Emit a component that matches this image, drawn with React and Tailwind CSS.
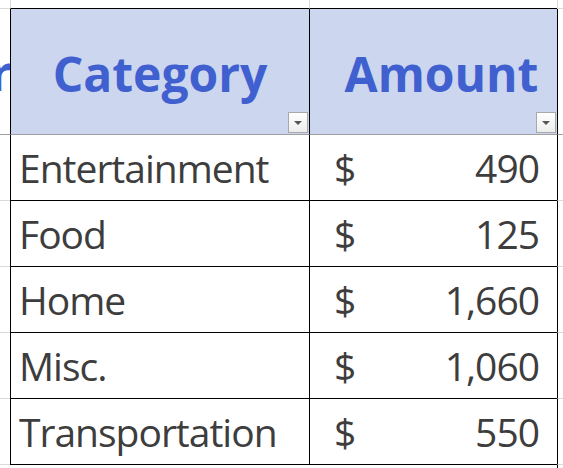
const rows = [
  ['Entertainment', '490'],
  ['Food', '125'],
  ['Home', '1,660'],
  ['Misc.', '1,060'],
  ['Transportation', '550'],
]

function FilterButton() {
  return (
    <div className="absolute right-px bottom-px w-[20px] h-[21px] border border-[#a9a9a9] bg-gradient-to-b from-white to-[#ededed] flex items-center justify-center">
      <div className="w-0 h-0 border-l-[4px] border-r-[4px] border-t-[4px] border-l-transparent border-r-transparent border-t-[#555]" />
    </div>
  )
}

export default function App() {
  return (
    <div className="w-[563px] h-[468px] bg-white overflow-hidden">
      <div className="grid grid-cols-[10px_299px_248px_6px] grid-rows-[9px_125px_repeat(5,66px)_4px]">
        {/* Row above the table */}
        <div className="border-b border-[#d9d9d9]" />
        <div className="border-l border-b border-[#d9d9d9] border-b-black" />
        <div className="border-l border-b border-[#d9d9d9] border-b-black" />
        <div className="border-l border-b border-[#d9d9d9]" />

        {/* Header */}
        <div className="overflow-hidden flex items-center justify-end text-[48px] font-bold text-[#4060d0] font-['Open_Sans',sans-serif] leading-none">
          <span className="-mr-[2px] pt-[3px]">r</span>
        </div>
        <div className="relative bg-[#ccd6ee] border-l border-black flex items-center justify-center">
          <span className="text-[48px] font-bold text-[#4060d0] font-['Open_Sans',sans-serif] leading-none pt-[5px]">Category</span>
          <FilterButton />
        </div>
        <div className="relative bg-[#ccd6ee] border-l border-black flex items-center justify-center">
          <span className="text-[48px] font-bold text-[#4060d0] font-['Open_Sans',sans-serif] leading-none pt-[5px] pl-4">Amount</span>
          <FilterButton />
        </div>
        <div className="border-l border-black" />

        {rows.map(([name, amount], i) => (
          <Row key={name} name={name} amount={amount} first={i === 0} />
        ))}

        {/* Row below the table */}
        <div className="border-t border-[#d9d9d9]" />
        <div className="border-t border-black" />
        <div className="border-t border-black" />
        <div className="border-t border-l border-[#d9d9d9] border-l-black" />
      </div>
    </div>
  )
}

function Row({ name, amount, first }) {
  const top = first ? 'border-t border-[#a0a0a0]' : 'border-t border-black'
  return (
    <>
      <div className={first ? 'border-t border-[#a0a0a0]' : 'border-t border-[#d9d9d9]'} />
      <div className={`${top} border-l border-l-black flex items-center pl-[8px] text-[39px] tracking-[-1px] text-[#3d3d3d] font-['Open_Sans',sans-serif] leading-none`}>
        {name}
      </div>
      <div className={`${top} border-l border-l-black flex items-center justify-between pl-[24px] pr-[18px] text-[39px] tracking-[-1px] text-[#3d3d3d] font-['Open_Sans',sans-serif] leading-none`}>
        <span>$</span>
        <span>{amount}</span>
      </div>
      <div className={`${first ? 'border-t border-[#a0a0a0]' : 'border-t border-[#d9d9d9]'} border-l border-l-black`} />
    </>
  )
}
